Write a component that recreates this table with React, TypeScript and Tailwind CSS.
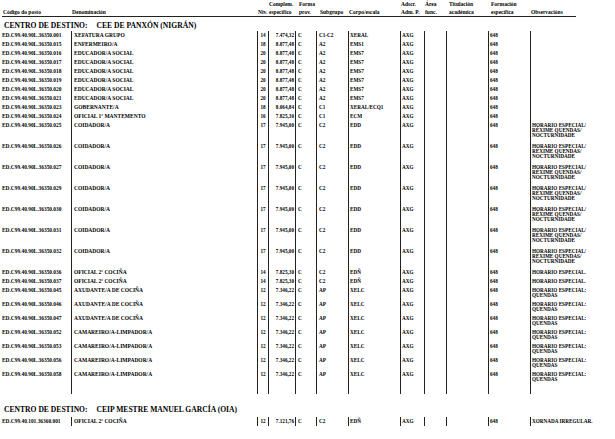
const cols =
  "grid grid-cols-[71px_186px_11px_27px_21px_32px_52px_24px_22px_42px_42px_1fr]";

type Row = {
  code: string;
  den: string;
  niv: string;
  comp: string;
  sub: string;
  corpo: string;
  obs: string[];
  h: string;
};

const QUENDAS3 = ["HORARIO ESPECIAL/", "RÉXIME QUENDAS/", "NOCTURNIDADE"];
const QUENDAS2 = ["HORARIO ESPECIAL:", "QUENDAS"];

const base = "ED.C99.40.90L.36350.";

const mk = (
  n: string,
  den: string,
  niv: string,
  comp: string,
  sub: string,
  corpo: string,
  obs: string[],
  h: string
): Row => ({ code: base + n, den, niv, comp, sub, corpo, obs, h });

const panxon: Row[] = [
  mk("001", "XEFATURA GRUPO", "14", "7.474,32", "C1-C2", "XERAL", [], "h-[9px]"),
  mk("015", "ENFERMEIRO/A", "18", "8.877,48", "A2", "EMS1", [], "h-[9px]"),
  mk("016", "EDUCADOR/A SOCIAL", "20", "8.877,48", "A2", "EMS7", [], "h-[9px]"),
  mk("017", "EDUCADOR/A SOCIAL", "20", "8.877,48", "A2", "EMS7", [], "h-[9px]"),
  mk("018", "EDUCADOR/A SOCIAL", "20", "8.877,48", "A2", "EMS7", [], "h-[9px]"),
  mk("019", "EDUCADOR/A SOCIAL", "20", "8.877,48", "A2", "EMS7", [], "h-[9px]"),
  mk("020", "EDUCADOR/A SOCIAL", "20", "8.877,48", "A2", "EMS7", [], "h-[9px]"),
  mk("021", "EDUCADOR/A SOCIAL", "20", "8.877,48", "A2", "EMS7", [], "h-[9px]"),
  mk("023", "GOBERNANTE/A", "18", "8.064,84", "C1", "XERAL/ECQ1", [], "h-[9px]"),
  mk("024", "OFICIAL 1ª MANTEMENTO", "16", "7.825,30", "C1", "ECM", [], "h-[9px]"),
  mk("025", "COIDADOR/A", "17", "7.945,00", "C2", "EDD", QUENDAS3, "h-[21px]"),
  mk("026", "COIDADOR/A", "17", "7.945,00", "C2", "EDD", QUENDAS3, "h-[21px]"),
  mk("027", "COIDADOR/A", "17", "7.945,00", "C2", "EDD", QUENDAS3, "h-[21px]"),
  mk("029", "COIDADOR/A", "17", "7.945,00", "C2", "EDD", QUENDAS3, "h-[21px]"),
  mk("030", "COIDADOR/A", "17", "7.945,00", "C2", "EDD", QUENDAS3, "h-[21px]"),
  mk("031", "COIDADOR/A", "17", "7.945,00", "C2", "EDD", QUENDAS3, "h-[21px]"),
  mk("032", "COIDADOR/A", "17", "7.945,00", "C2", "EDD", QUENDAS3, "h-[21px]"),
  mk("036", "OFICIAL 2ª COCIÑA", "14", "7.825,30", "C2", "EDÑ", ["HORARIO ESPECIAL."], "h-[9px]"),
  mk("037", "OFICIAL 2ª COCIÑA", "14", "7.825,30", "C2", "EDÑ", ["HORARIO ESPECIAL."], "h-[9px]"),
  mk("045", "AXUDANTE/A DE COCIÑA", "12", "7.346,22", "AP", "XELC", QUENDAS2, "h-[14px]"),
  mk("046", "AXUDANTE/A DE COCIÑA", "12", "7.346,22", "AP", "XELC", QUENDAS2, "h-[14px]"),
  mk("047", "AXUDANTE/A DE COCIÑA", "12", "7.346,22", "AP", "XELC", QUENDAS2, "h-[14px]"),
  mk("052", "CAMAREIRO/A-LIMPADOR/A", "12", "7.346,22", "AP", "XELC", QUENDAS2, "h-[14px]"),
  mk("053", "CAMAREIRO/A-LIMPADOR/A", "12", "7.346,22", "AP", "XELC", QUENDAS2, "h-[14px]"),
  mk("056", "CAMAREIRO/A-LIMPADOR/A", "12", "7.346,22", "AP", "XELC", QUENDAS2, "h-[14px]"),
  mk("058", "CAMAREIRO/A-LIMPADOR/A", "12", "7.346,22", "AP", "XELC", QUENDAS2, "h-[14px]"),
];

const oia: Row = {
  code: "ED.C99.40.101.36360.001",
  den: "OFICIAL 2ª COCIÑA",
  niv: "12",
  comp: "7.121,76",
  sub: "C2",
  corpo: "EDÑ",
  obs: ["XORNADA IRREGULAR."],
  h: "h-[9px]",
};

const line = "border-l border-[#222]";

function DataRow({ r }: { r: Row }) {
  return (
    <div className={`${cols} ${r.h} leading-[5px]`}>
      <div className="pl-[2px] pt-[1.5px] text-[5.4px]">{r.code}</div>
      <div className={`${line} pl-[2px] pt-[1.5px] text-[5.5px]`}>{r.den}</div>
      <div className={`${line} pt-[1.5px] text-center`}>{r.niv}</div>
      <div className={`${line} pt-[1.5px] pr-[1px] text-right`}>{r.comp}</div>
      <div className={`${line} pl-[2px] pt-[1.5px]`}>C</div>
      <div className={`${line} pl-[2px] pt-[1.5px]`}>{r.sub}</div>
      <div className={`${line} pl-[1px] pt-[1.5px]`}>{r.corpo}</div>
      <div className={`${line} pl-[1px] pt-[1.5px]`}>AXG</div>
      <div className={line}></div>
      <div className={line}></div>
      <div className={`${line} pl-[1px] pt-[1.5px]`}>648</div>
      <div className={`${line} pl-[1px] pt-[1.5px]`}>
        {r.obs.map((o, i) => (
          <div key={i}>{o}</div>
        ))}
      </div>
    </div>
  );
}

function Filler() {
  return (
    <div className={`${cols} h-[10px]`}>
      <div></div>
      <div className={line}></div>
      <div className={line}></div>
      <div className={line}></div>
      <div className={line}></div>
      <div className={line}></div>
      <div className={line}></div>
      <div className={line}></div>
      <div className={line}></div>
      <div className={line}></div>
      <div className={line}></div>
      <div className={line}></div>
    </div>
  );
}

function Head({ a, b, className = "" }: { a?: string; b: string; className?: string }) {
  return (
    <div className={`flex flex-col justify-end border-b border-[#222] ${className}`}>
      {a && <div>{a}</div>}
      <div>{b}</div>
    </div>
  );
}

function Title({ name, className }: { name: string; className: string }) {
  return (
    <div className={`flex pl-[4px] text-[7.6px] leading-[8px] ${className}`}>
      <span>CENTRO DE DESTINO:</span>
      <span className="ml-[9px]">{name}</span>
    </div>
  );
}

export default function App() {
  return (
    <div
      className="w-[615px] h-[439px] overflow-hidden bg-white text-black font-bold text-[5.2px]"
      style={{ fontFamily: '"Liberation Serif", "Times New Roman", serif' }}
    >
      <div className={`${cols} h-[17px] text-[5.5px] leading-[8px]`}>
        <Head b="Código do posto" className="ml-[2px] pl-[1px]" />
        <Head b="Denominación" className="pl-[1px]" />
        <Head b="Niv." className="pl-[1px]" />
        <Head a="Complem." b="específico" className="pl-[1px]" />
        <Head a="Forma" b="prov." className="pl-[4px]" />
        <Head b="Subgrupo" className="pl-[4px]" />
        <Head b="Corpo/escala" className="pl-[1px]" />
        <Head a="Adscr." b="Adm. P." className="pl-[1px]" />
        <Head a="Área" b="func." className="pl-[1px]" />
        <Head a="Titulación" b="académica" className="pl-[3px]" />
        <Head a="Formación" b="específica" className="pl-[3px]" />
        <div className="flex">
          <Head b="Observacións" className="w-[46px] pl-[1px]" />
        </div>
      </div>

      <Title name="CEE DE PANXÓN (NIGRÁN)" className="h-[14px] pt-[5px]" />
      {panxon.map((r) => (
        <DataRow key={r.code} r={r} />
      ))}
      <Filler />

      <Title name="CEIP MESTRE MANUEL GARCÍA (OIA)" className="h-[22px] items-end pb-[2px]" />
      <div className="mt-[1px]">
        <DataRow r={oia} />
      </div>
    </div>
  );
}
